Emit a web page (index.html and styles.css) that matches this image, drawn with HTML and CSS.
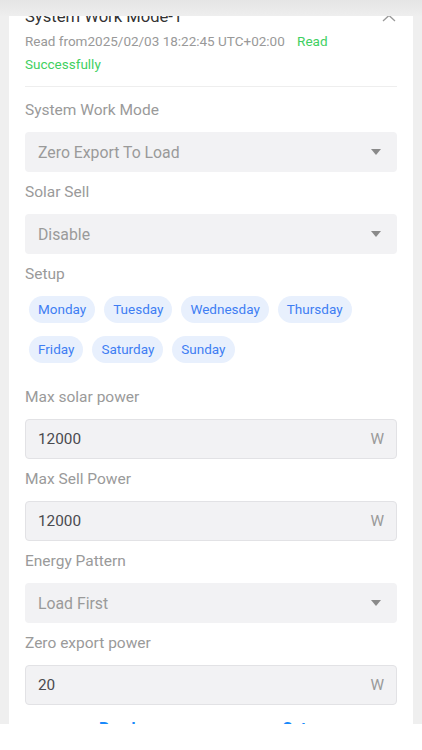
FILE: index.html
```html
<!DOCTYPE html>
<html lang="en">

<head>
    <meta charset="UTF-8">
    <meta name="viewport" content="width=device-width, initial-scale=1.0">
    <title>System Work Mode</title>
    <link rel="stylesheet" href="styles.css">
</head>

<body>
    <div class="topbar"></div>

    <main class="card">
        <div class="card-head">
            <div class="title-row">
                <h2>System Work Mode-1</h2>
                <svg class="chevron" width="14" height="8" viewBox="0 0 14 8">
                    <path d="M1 7 L7 1.5 L13 7" fill="none" stroke="#9a9a9a" stroke-width="1.3" />
                </svg>
            </div>
            <p class="read-info">Read from2025/02/03 18:22:45 UTC+02:00 <span class="ok first">Read</span> <span class="ok">Successfully</span></p>
        </div>

        <div class="field">
            <label>System Work Mode</label>
            <div class="select">Zero Export To Load<i class="caret"></i></div>
        </div>

        <div class="field">
            <label>Solar Sell</label>
            <div class="select">Disable<i class="caret"></i></div>
        </div>

        <div class="field field-days">
            <label>Setup</label>
            <div class="days">
                <span class="chip">Monday</span>
                <span class="chip">Tuesday</span>
                <span class="chip">Wednesday</span>
                <span class="chip">Thursday</span>
                <span class="chip">Friday</span>
                <span class="chip">Saturday</span>
                <span class="chip">Sunday</span>
            </div>
        </div>

        <div class="field">
            <label>Max solar power</label>
            <div class="input"><span class="value">12000</span><span class="unit">W</span></div>
        </div>

        <div class="field">
            <label>Max Sell Power</label>
            <div class="input"><span class="value">12000</span><span class="unit">W</span></div>
        </div>

        <div class="field">
            <label>Energy Pattern</label>
            <div class="select">Load First<i class="caret"></i></div>
        </div>

        <div class="field">
            <label>Zero export power</label>
            <div class="input"><span class="value">20</span><span class="unit">W</span></div>
        </div>

        <div class="actions">
            <button class="btn btn-read">Read</button>
            <button class="btn btn-set">Set</button>
        </div>
    </main>

    <div class="bottombar"></div>
</body>

</html>
```

FILE: styles.css
```css
html,
body {
    margin: 0;
    height: 750px;
    overflow: hidden;
    background: #efefef;
    font-family: Roboto, "Noto Sans", sans-serif;
}

body {
    position: relative;
}

.topbar {
    position: absolute;
    top: 0;
    left: 0;
    right: 0;
    height: 16px;
    background: linear-gradient(#e5e5e5, #eeeeee);
    z-index: 2;
}

.bottombar {
    position: absolute;
    top: 724px;
    left: 0;
    right: 0;
    bottom: 0;
    background: #fff;
    z-index: 2;
}

.card {
    margin: 0 9px;
    padding: 5px 16px 0;
    background: #fff;
    height: 750px;
    box-sizing: border-box;
}

.card-head {
    padding-bottom: 10px;
    border-bottom: 1px solid #eeeeee;
    margin-bottom: 13px;
}

.title-row {
    display: flex;
    justify-content: space-between;
    align-items: flex-start;
}

.title-row h2 {
    margin: 0;
    font-size: 16.6px;
    line-height: 24px;
    font-weight: 400;
    color: #333;
}

.chevron {
    margin: 9px 1px 0 0;
}

.read-info {
    margin: 1px 0 0;
    font-size: 13.5px;
    line-height: 23px;
    color: #999;
}

.read-info .ok {
    color: #3fd062;
}

.read-info .first {
    margin-left: 9px;
}

.field {
    margin-bottom: 10px;
}

.field label {
    display: block;
    font-size: 15.5px;
    line-height: 20px;
    color: #9a9a9a;
    margin-bottom: 12px;
}

.select,
.input {
    display: flex;
    align-items: center;
    justify-content: space-between;
    height: 40px;
    box-sizing: border-box;
    border-radius: 4px;
    background: #f2f2f4;
}

.select {
    padding: 0 16px 0 13px;
    font-size: 15.8px;
    color: #9a9a9a;
}

.caret {
    width: 0;
    height: 0;
    border-left: 5px solid transparent;
    border-right: 5px solid transparent;
    border-top: 6px solid #8a8a8a;
}

.input {
    padding: 0 12px;
    border: 1px solid #e2e2e5;
    font-size: 15.3px;
}

.input .value {
    color: #4a4a4f;
}

.input .unit {
    color: #9a9a9a;
}

.field-days {
    margin-bottom: 24px;
}

.days {
    display: flex;
    flex-wrap: wrap;
    gap: 13px 9px;
    padding-left: 4px;
}

.chip {
    height: 27px;
    line-height: 27px;
    padding: 0 9px;
    border-radius: 14px;
    background: #e8f0fd;
    color: #3f7ef3;
    font-size: 13.5px;
}

.actions {
    display: flex;
    margin-top: 13px;
    padding-left: 74px;
}

.btn {
    padding: 0;
    border: none;
    background: none;
    font-family: inherit;
    font-size: 16px;
    line-height: 22px;
    font-weight: 700;
    color: #1989fa;
}

.btn-set {
    margin-left: 147px;
}
```
